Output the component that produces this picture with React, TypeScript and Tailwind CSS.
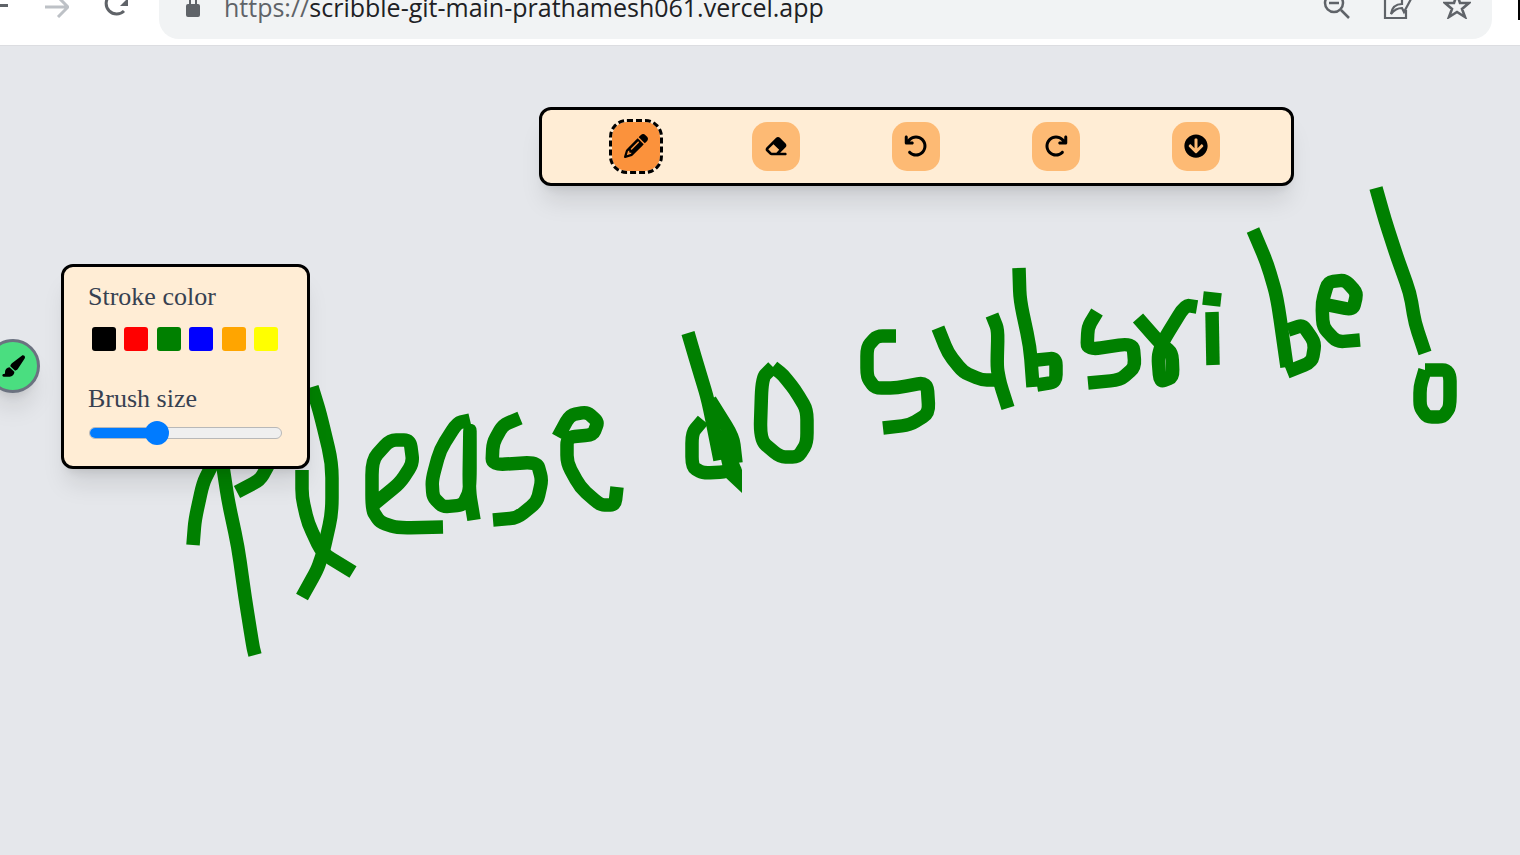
import { FaArrowCircleDown } from "react-icons/fa";
import { FaArrowRotateLeft, FaArrowRotateRight, FaEraser, FaPaintbrush, FaPencil } from "react-icons/fa6";

const strokes = [
  // P
  "M193 545 L195 520 L203 483 L213 463",
  "M223 467 L228 500 L238 547 L245 597 L253 647 L255 655",
  "M237 492 L260 480 L270 462",
  // l
  "M312 387 L320 413 L332 463 L332 513 L323 553 L317 570 L302 597",
  "M302 470 L302 497 L308 523 L322 553 L353 572",
  // e a s e
  "M443 527 L397 528 L380 522 L372 510 L372 460 L390 440 L410 440 L413 463 L400 483 L373 505",
  "M470 420 L457 423 L440 450 L432 480 L433 497 L443 507 L463 505 L470 490 L470 420 L469 490 L474 520",
  "M520 418 L503 425 L493 443 L492 465 L537 462 L542 480 L537 502 L517 518 L493 520",
  "M558 437 L570 415 L587 412 L598 422 L593 435 L567 437 L567 463 L580 487 L600 505 L615 505 L617 487",
  // d o
  "M688 333 L698 367 L708 400 L720 460",
  "M710 400 L733 437 L736 463",
  "M703 420 L692 433 L692 467 L703 473 L727 472 L737 463",
  "M773 367 L762 378 L760 440 L780 457 L798 457 L807 443 L807 410 L795 390 L783 375 L773 367",
  // S u b
  "M896 336 L877 336 L867 347 L867 377 L875 388 L897 388 L927 382 L929 413 L910 425 L883 428",
  "M938 328 L948 353 L963 372 L982 380 L998 380",
  "M992 315 L998 330 L997 367 L1000 383 L1008 408",
  "M1019 268 L1020 300 L1030 347 L1033 387",
  "M1037 360 L1056 358 L1056 382 L1037 385",
  // s r i
  "M1097 312 L1088 327 L1087 350 L1133 343 L1135 367 L1120 380 L1088 383",
  "M1138 318 L1160 343 L1172 353 L1173 377 L1160 382 L1158 357 L1162 343 L1185 305 L1197 307",
  "M1212 312 L1213 365",
  "M1203 298 L1221 300",
  // b e
  "M1253 230 L1267 263 L1277 297 L1287 367",
  "M1288 330 L1303 325 L1315 343 L1312 362 L1287 372",
  "M1328 305 L1353 310 L1357 293 L1345 280 L1328 282 L1322 303 L1323 327 L1337 342 L1360 340",
  // !
  "M1376 188 L1385 220 L1397 257 L1410 293 L1415 323 L1425 353",
  "M1425 370 L1450 370 L1450 407 L1443 417 L1427 417 L1420 407 L1420 387 L1425 370",
];

// rounds the corners of a hand-picked polyline so it reads as a mouse stroke
function smooth(d: string) {
  const nums = d.match(/[\d.]+/g)!.map(Number);
  const pts: [number, number][] = [];
  for (let i = 0; i < nums.length; i += 2) pts.push([nums[i], nums[i + 1]]);
  const t = 0.3;
  let out = `M${pts[0][0]} ${pts[0][1]}`;
  for (let i = 1; i < pts.length - 1; i++) {
    const [px, py] = pts[i - 1];
    const [x, y] = pts[i];
    const [nx, ny] = pts[i + 1];
    out += ` L${x + (px - x) * t} ${y + (py - y) * t} Q${x} ${y} ${x + (nx - x) * t} ${y + (ny - y) * t}`;
  }
  const last = pts[pts.length - 1];
  return `${out} L${last[0]} ${last[1]}`;
}

const colors = ["bg-[#000000]", "bg-[#ff0000]", "bg-[#008000]", "bg-[#0000ff]", "bg-[#ffa500]", "bg-[#ffff00]"];

function ToolButton({ children, active }: { children: React.ReactNode; active?: boolean }) {
  return (
    <div
      className={
        active
          ? "flex h-[49px] w-12 items-center justify-center rounded-[15px] bg-[#fb923c] pb-[2px] text-[24px] text-black outline-[3px] outline-dashed outline-black"
          : "flex h-[49px] w-12 items-center justify-center rounded-[15px] bg-[#fdba74] pb-[2px] text-[24px] text-black"
      }
    >
      {children}
    </div>
  );
}

function BrowserBar() {
  return (
    <header className="relative z-10 flex h-[46px] shrink-0 border-b border-[#dcdde1] bg-white">
      <div className="mt-1 h-[3px] w-2 bg-[#5f6368]" />
      <svg className="ml-[37px] h-[18px] w-[24px]" viewBox="0 0 24 18" fill="none" stroke="#bdc1c6" strokeWidth="3">
        <path d="M0 7 L22 7 M13 -3 L23 7 L13 17" />
      </svg>
      <svg className="ml-[34px] h-[19px] w-[27px]" viewBox="0 0 27 19" fill="none" stroke="#5f6368" strokeWidth="3">
        <path d="M21 11 A10.5 10.5 0 1 1 21 -4" />
        <path d="M25 -2 L25 6 L17 6 Z" fill="#5f6368" stroke="none" />
      </svg>
      <div className="ml-[29px] flex h-[39px] w-[1333px] items-start overflow-hidden rounded-b-[20px] bg-[#f1f3f4]">
        <svg className="ml-[25px] h-[17px] w-[18px]" viewBox="0 0 18 17" fill="#5f6368">
          <path d="M5 4 V0 H7 V4 H11 V0 H13 V4 H14 A2 2 0 0 1 16 6 V15 A2 2 0 0 1 14 17 H4 A2 2 0 0 1 2 15 V6 A2 2 0 0 1 4 4 Z" />
        </svg>
        <div className="ml-[22px] mt-[-10px] font-['Open_Sans',sans-serif] text-[25px] leading-[34px] whitespace-nowrap text-[#5f6368]">
          https://<span className="text-[#202124]">scribble-git-main-prathamesh061.vercel.app</span>
        </div>
        <div className="ml-auto flex items-start">
          <svg className="mr-[2px] h-[20px] w-[28px]" viewBox="0 0 28 20" fill="none" stroke="#5f6368" strokeWidth="2.5">
            <circle cx="11" cy="3" r="9" />
            <path d="M6 3 L16 3 M18 10 L26 18" />
          </svg>
          <svg className="ml-[30px] h-[19px] w-[30px]" viewBox="0 0 30 19" fill="none" stroke="#5f6368" strokeWidth="2.2">
            <path d="M13 -1 L2 -1 L2 18 L23 18 L23 10" />
            <path d="M8 14 C9 7 13 4 19 4 L19 -2 L28 -1 L21 12 L19 8 C15 8 11 10 8 14 Z" />
          </svg>
          <svg className="ml-[30px] mr-[21px] h-[19px] w-[28px]" viewBox="0 0 28 19" fill="none" stroke="#5f6368" strokeWidth="2.6">
            <path d="M14 -6 L17 3 L26 3 L19 9 L22 17 L14 12 L6 17 L9 9 L2 3 L11 3 Z" />
          </svg>
        </div>
      </div>
      <div className="ml-auto h-[20px] w-[2px] bg-black" />
    </header>
  );
}

export default function App() {
  return (
    <div className="flex h-[855px] w-[1520px] flex-col overflow-hidden bg-[#e5e7eb]">
      <BrowserBar />
      <main className="relative flex-1">
        <svg className="absolute inset-0 h-full w-full" viewBox="0 46 1520 809" fill="none" stroke="#008000" strokeWidth="13.5" strokeLinejoin="round" strokeLinecap="butt">
          {strokes.map((d) => (
            <path key={d} d={smooth(d)} />
          ))}
          <path d="M712 420 L730 440 L742 470 L742 493 L725 477 Z" fill="#008000" stroke="none" />
        </svg>

        <div className="absolute top-[61px] left-[539px] flex h-[79px] w-[755px] items-center justify-between rounded-[12px] border-[3px] border-black bg-[#ffedd5] pr-[71px] pl-[70px] shadow-xl">
          <ToolButton active>
            <FaPencil />
          </ToolButton>
          <ToolButton>
            <FaEraser />
          </ToolButton>
          <ToolButton>
            <FaArrowRotateLeft />
          </ToolButton>
          <ToolButton>
            <FaArrowRotateRight />
          </ToolButton>
          <ToolButton>
            <FaArrowCircleDown />
          </ToolButton>
        </div>

        <div className="absolute top-[293px] left-[-14px] flex h-[54px] w-[54px] items-center justify-center rounded-full border-[3px] border-[#6b7280] bg-[#4ade80] text-[24px] text-black shadow-xl">
          <FaPaintbrush />
        </div>

        <div className="absolute top-[218px] left-[61px] h-[205px] w-[249px] rounded-[12px] border-[3px] border-black bg-[#ffedd5] pt-[15px] pl-[24px] font-['Liberation_Serif',serif] text-[#374151] shadow-xl">
          <div className="text-[26px] leading-[30px]">Stroke color</div>
          <div className="mt-[15px] ml-[4px] flex gap-[8.4px]">
            {colors.map((c) => (
              <div key={c} className={`h-6 w-6 rounded-[3px] ${c}`} />
            ))}
          </div>
          <div className="mt-[33px] text-[26px] leading-[30px]">Brush size</div>
          <div className="mt-[13px] ml-[1px] flex h-[12px] w-[193px] overflow-hidden rounded-full border border-[#b8b8b8] bg-[#efefef]">
            <div className="-m-px h-[12px] w-[68px] bg-[#007bff]" />
          </div>
          <div className="absolute top-[154px] left-[81px] h-6 w-6 rounded-full bg-[#007bff]" />
        </div>
      </main>
    </div>
  );
}
